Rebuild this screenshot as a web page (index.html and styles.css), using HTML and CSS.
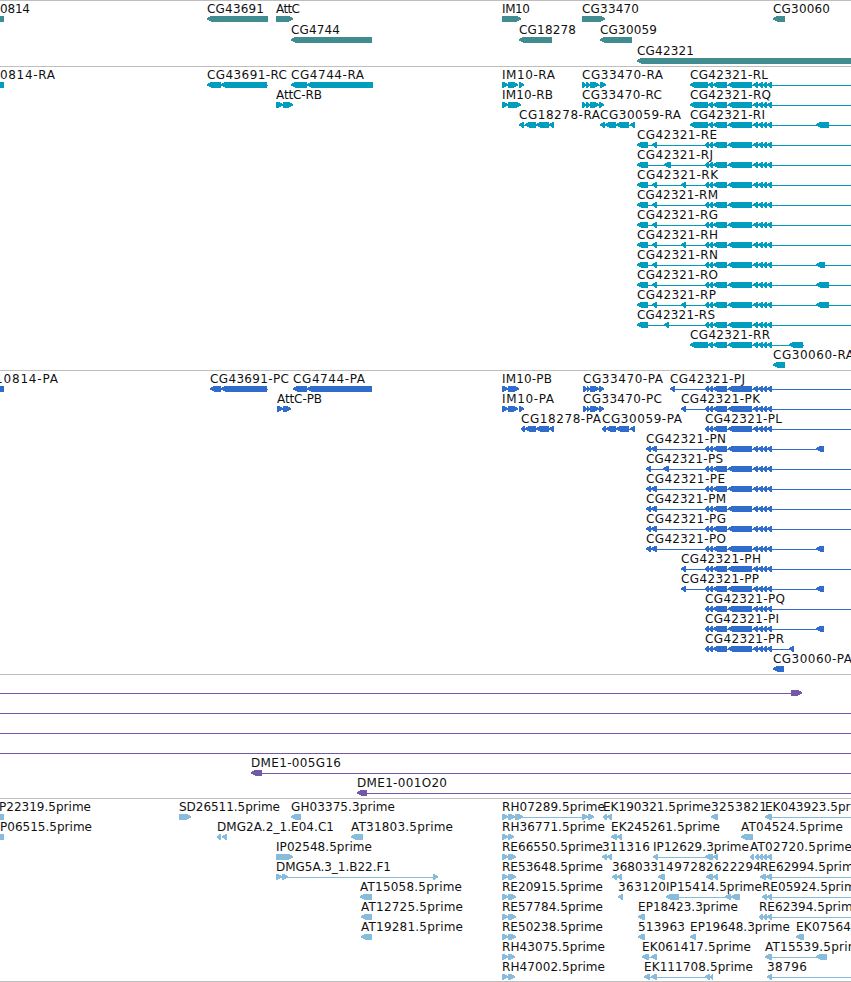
FILE: index.html
```html
<!DOCTYPE html>
<html lang="en">
<head>
<meta charset="utf-8">
<title>Genome browser tracks</title>
<link rel="stylesheet" href="styles.css">
</head>
<body>
<main class="browser" id="browser"></main>
<script src="tracks.js"></script>
</body>
</html>
```
FILE: styles.css
```css
body { margin: 0; background: #fff; overflow: hidden; }
.browser { display: flex; flex-direction: column; height: 982px; overflow: hidden; }
.track { box-sizing: border-box; flex: none; border-top: 1px solid #bebebe; overflow: hidden; }
.track svg { display: block; width: 100%; height: 100%; }
.track text { font-family: "DejaVu Sans", sans-serif; font-size: 12px; fill: #111; }
.genes { height: 66px; color: #408c90; }
.transcripts { height: 304px; color: #009dbf; }
.proteins { height: 304px; color: #306ccc; }
.bacs { height: 124px; color: #7359a8; }
.ests { height: 184px; color: #87bcdc; border-bottom: 1px solid #bebebe; }
.feature { fill: currentColor; shape-rendering: crispEdges; }
```
FILE: tracks.js
```js
// Feature: label | label start | label end | direction | exons | optional line start-end
const core = "705-709 709-713 713-727 728-752 753-758 758-763 763-767 767-772";
const wide = "690-708 708-713 713-727 728-752 753-758 758-763 763-767 767-772";
const tracks = [
  { name: "genes", pitch: 21, rows: [
    ["0814|0|30|b|0-4", "CG43691|207|264|<|207-268", "AttC|276|300|>|276-293", "IM10|502|530|>|502-521", "CG33470|582|639|>|582-605", "CG30060|773|830|<|773-785"],
    ["CG4744|291|340|<|291-372", "CG18278|519|576|<|519-552", "CG30059|600|657|<|600-632"],
    ["CG42321|637|694|<|637-860"]
  ]},
  { name: "transcripts", pitch: 20, rows: [
    ["0814-RA|0|55|b|0-4", "CG43691-RC|207|287|<|207-221 221-267|207-268", "CG4744-RA|291|364|<|291-307 307-373", "IM10-RA|502|555|>|502-508 508-518 519-524", "CG33470-RA|582|663|>|582-586 586-590 590-599 600-606|582-606", `CG42321-RL|690|768|<|${wide}|690-851`],
    ["AttC-RB|276|322|>|276-283 283-293", "IM10-RB|502|553|>|502-508 508-521", "CG33470-RC|582|662|>|582-586 586-590 590-599 599-604|582-604", `CG42321-RQ|690|771|<|${wide}|690-851`],
    ["CG18278-RA|519|600|<|519-524 525-536 536-549 549-554|519-554", "CG30059-RA|600|681|<|600-605 605-616 616-629 630-635|600-635", `CG42321-RI|690|765|<|${wide} 816-829|690-851`],
    [`CG42321-RE|637|717|<|637-648 652-657 ${core}|637-851`],
    [`CG42321-RJ|637|713|<|637-648 664-671 ${core}|637-851`],
    [`CG42321-RK|637|718|<|637-648 652-657 681-686 ${core}|637-851`],
    [`CG42321-RM|637|718|<|637-648 652-657 ${core}|637-851`],
    [`CG42321-RG|637|718|<|637-648 652-657 ${core}|637-851`],
    [`CG42321-RH|637|718|<|637-648 652-657 681-686 ${core}|637-851`],
    [`CG42321-RN|637|718|<|637-648 652-657 ${core} 816-825|637-851`],
    [`CG42321-RO|637|718|<|637-648 652-657 ${core} 816-829|637-851`],
    [`CG42321-RP|637|716|<|637-648 652-657 681-686 ${core} 816-829|637-851`],
    [`CG42321-RS|637|715|<|637-648 664-669 ${core}|637-851`],
    [`CG42321-RR|690|770|<|${wide} 789-803|690-804`],
    ["CG30060-RA|773|854|<|773-785"]
  ]},
  { name: "proteins", pitch: 20, rows: [
    ["10814-PA|-5|58|b|0-4", "CG43691-PC|210|289|<|210-221 221-267|210-268", "CG4744-PA|293|365|<|293-307 307-372", "IM10-PB|502|552|>|502-508 508-519", "CG33470-PA|583|663|>|583-587 587-590 590-599 599-604|583-604", `CG42321-PJ|670|745|<|670-675 ${core}|670-851`],
    ["AttC-PB|277|322|>|277-283 283-291", "IM10-PA|502|554|>|502-508 508-518 519-524", "CG33470-PC|583|662|>|583-587 587-590 590-599 599-604|583-604", `CG42321-PK|681|760|<|681-686 ${core}|681-851`],
    ["CG18278-PA|521|601|<|521-525 525-536 536-549 549-554|521-554", "CG30059-PA|602|682|<|602-606 606-616 616-629 630-635|602-635", `CG42321-PL|705|782|<|${core}|705-851`],
    [`CG42321-PN|646|726|<|646-651 651-657 ${core} 816-824|646-824`],
    [`CG42321-PS|646|723|<|646-651 663-669 ${core}|646-851`],
    [`CG42321-PE|646|725|<|646-651 651-657 ${core}|646-851`],
    [`CG42321-PM|646|726|<|646-651 651-657 ${core}|646-851`],
    [`CG42321-PG|646|726|<|646-651 651-657 ${core}|646-851`],
    [`CG42321-PO|646|726|<|646-651 651-657 ${core} 816-824|646-824`],
    [`CG42321-PH|681|761|<|681-686 ${core}|681-851`],
    [`CG42321-PP|681|759|<|681-686 ${core} 816-824|681-824`],
    [`CG42321-PQ|705|785|<|${core}|705-851`],
    [`CG42321-PI|705|779|<|${core} 816-824|705-824`],
    [`CG42321-PR|705|784|<|${core} 789-794|705-794`],
    ["CG30060-PA|773|852|<|773-784"]
  ]},
  { name: "bacs", pitch: 20, rows: [
    ["|0|0|>|791-802|0-802"], ["|0|0|>||0-851"], ["|0|0|>||0-851"], ["|0|0|>||0-851"],
    ["DME1-005G16|251|341|<|251-262|251-851"],
    ["DME1-001O20|357|447|<|357-367|357-851"]
  ]},
  { name: "ests", pitch: 20, rows: [
    ["P22319.5prime|-1|91|b|0-4", "SD26511.5prime|179|280|>|179-191", "GH03375.3prime|291|395|<|291-301", "RH07289.5prime|502|605|>|502-508 508-515 515-523 582-588 588-594|502-594", "EK190321.5prime|603|711|<|603-607 607-612", "3253821|711|767|<|711-718", "EK043923.5prime|765|873|<|765-772|765-851"],
    ["P06515.5prime|0|92|b|0-4", "DMG2A.2_1.E04.C1|217|334|<|217-221 222-227", "AT31803.5prime|351|453|<|351-363", "RH36771.5prime|502|605|>|502-508 508-514", "EK245261.5prime|611|720|<|611-617 617-622", "AT04524.5prime|741|843|<|741-753"],
    ["IP02548.5prime|276|372|>|276-293", "RE66550.5prime|502|603|>|502-508 508-516", "311316|602|650|<|602-607 607-612", "IP12629.3prime|653|749|<|653-658 705-713 713-718|653-718", "AT02720.5prime|750|852|<|750-754 755-759 759-763 763-767 767-772"],
    ["DMG5A.3_1.B22.F1|276|391|>|276-282 282-288 433-438|276-438", "RE53648.5prime|502|603|>|502-508 508-516", "368033|612|658|<|612-617 617-622", "149728|658|706|<|658-665", "2622294|706|761|<|706-713 713-718", "RE62994.5prime|760|861|<|760-766 766-772|760-851"],
    ["AT15058.5prime|360|462|<|360-372", "RE20915.5prime|502|603|>|502-508 508-516", "363120|618|666|<|618-623", "IP15414.5prime|666|762|<|666-679 725-731 731-740|666-740", "RE05924.5prime|762|863|<|762-767 767-772|762-851"],
    ["AT12725.5prime|361|463|<|361-372", "RE57784.5prime|502|603|>|502-508 508-516", "EP18423.3prime|638|738|<|638-645", "RE62394.5prime|759|860|<|759-763 763-767 767-772|759-851"],
    ["AT19281.5prime|361|463|<|361-372", "RE50238.5prime|502|603|>|502-508 508-516", "513963|638|685|<|638-645", "EP19648.3prime|690|790|<|690-696", "EK07564|796|851|<|796-804"],
    ["RH43075.5prime|502|605|>|502-508 508-515", "EK061417.5prime|642|751|<|642-649 651-657|642-657", "AT15539.5prime|765|867|<|765-772 816-827|765-827"],
    ["RH47002.5prime|502|605|>|502-508 508-515", "EK111708.5prime|644|753|<|644-650 651-657 705-710 710-713|644-713", "38796|767|807|<|767-772|767-851"]
  ]}
];

// Exon outline, six pixels high, with a stepped head of up to six pixels.
function exon(a, b, dir, y) {
  if (dir === "b") return `M${a} ${y}H${b}v6H${a}z`;
  const h = Math.min(6, b - a);
  const tip = dir === "<" ? a : b;
  const s = dir === "<" ? 1 : -1;
  const end = dir === "<" ? b : a;
  const px = k => tip + s * Math.round(h * k);
  return `M${tip} ${y + 2}H${px(0.2)}V${y + 1}H${px(0.5)}V${y}H${end}V${y + 6}H${px(0.6)}V${y + 5}H${px(0.3)}V${y + 4}H${tip}z`;
}

document.getElementById("browser").innerHTML = tracks.map(track => {
  let shapes = "", labels = "";
  track.rows.forEach((row, i) => row.forEach(item => {
    const [label, x, end, dir, exons, line] = item.split("|");
    const top = i * track.pitch;
    if (line) {
      const [a, b] = line.split("-");
      shapes += `<path class="feature" d="M${a} ${top + 18}H${b}v1H${a}z"/>`;
    }
    if (exons) {
      const d = exons.split(" ").map(e => {
        const [a, b] = e.split("-").map(Number);
        return exon(a, b, dir, top + 15);
      }).join("");
      shapes += `<path class="feature" d="${d}"/>`;
    }
    if (label) labels += `<text x="${x}" y="${top + 12}" textLength="${end - x}">${label}</text>`;
  }));
  return `<section class="track ${track.name}"><svg>${shapes}${labels}</svg></section>`;
}).join("");
```
